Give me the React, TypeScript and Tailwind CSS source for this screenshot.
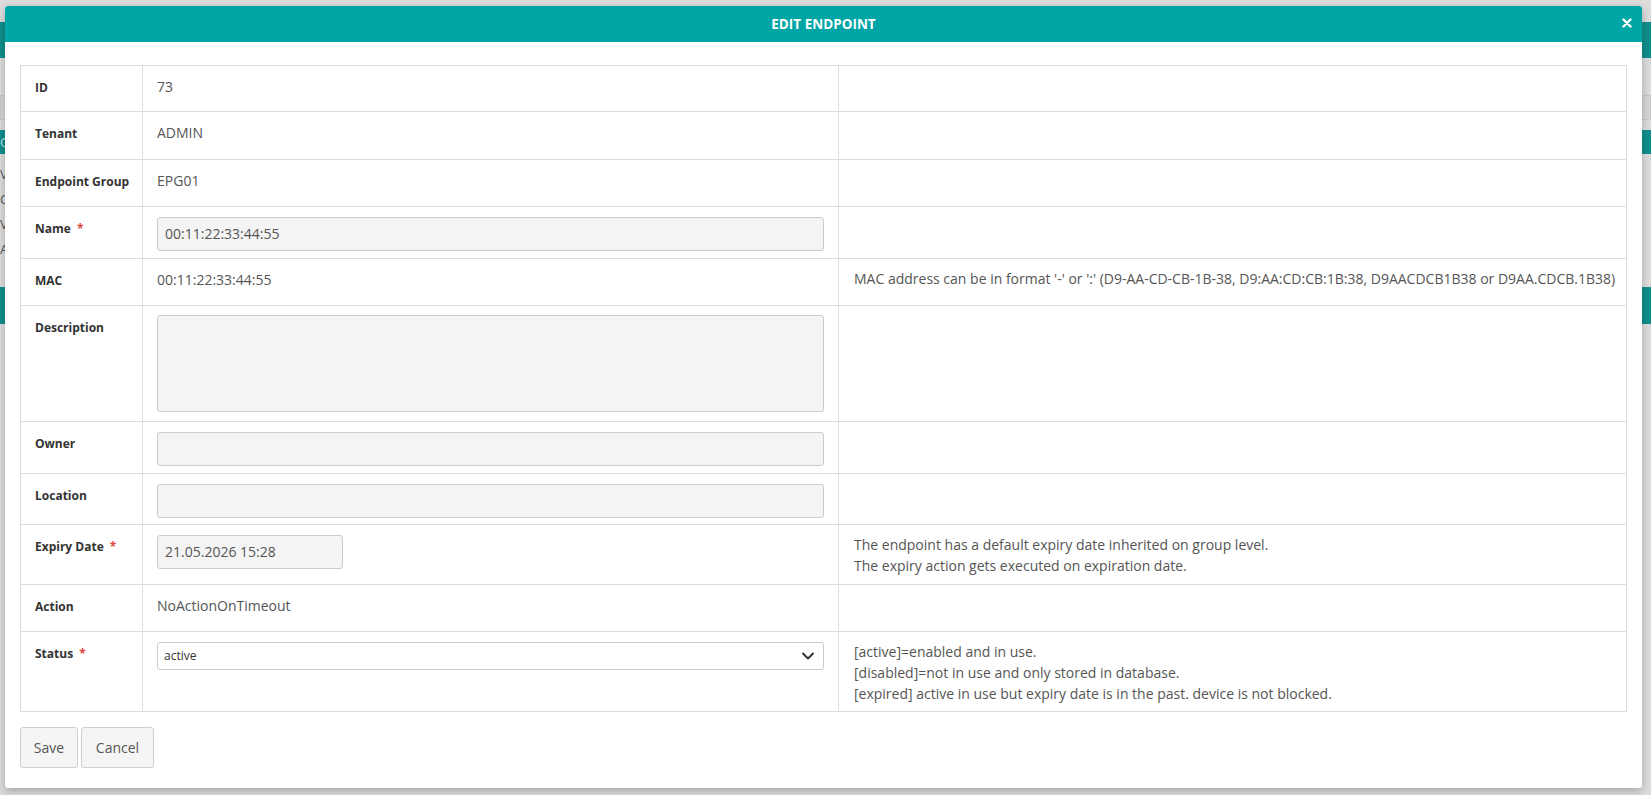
import React from "react";

type Row = {
  label: string;
  req?: boolean;
  h: string;
  kind: "text" | "input" | "textarea" | "date" | "select";
  value?: string;
  help?: string[];
};

const rows: Row[] = [
  { label: "ID", h: "h-[46px]", kind: "text", value: "73" },
  { label: "Tenant", h: "h-[48px]", kind: "text", value: "ADMIN" },
  { label: "Endpoint Group", h: "h-[47px]", kind: "text", value: "EPG01" },
  { label: "Name", req: true, h: "h-[52px]", kind: "input", value: "00:11:22:33:44:55" },
  {
    label: "MAC",
    h: "h-[47px]",
    kind: "text",
    value: "00:11:22:33:44:55",
    help: [
      "MAC address can be in format '-' or ':' (D9-AA-CD-CB-1B-38, D9:AA:CD:CB:1B:38, D9AACDCB1B38 or D9AA.CDCB.1B38)",
    ],
  },
  { label: "Description", h: "h-[116px]", kind: "textarea" },
  { label: "Owner", h: "h-[52px]", kind: "input", value: "" },
  { label: "Location", h: "h-[51px]", kind: "input", value: "" },
  {
    label: "Expiry Date",
    req: true,
    h: "h-[60px]",
    kind: "date",
    value: "21.05.2026 15:28",
    help: [
      "The endpoint has a default expiry date inherited on group level.",
      "The expiry action gets executed on expiration date.",
    ],
  },
  { label: "Action", h: "h-[47px]", kind: "text", value: "NoActionOnTimeout" },
  {
    label: "Status",
    req: true,
    h: "h-[80px]",
    kind: "select",
    value: "active",
    help: [
      "[active]=enabled and in use.",
      "[disabled]=not in use and only stored in database.",
      "[expired] active in use but expiry date is in the past. device is not blocked.",
    ],
  },
];

function ValueCell({ row }: { row: Row }) {
  if (row.kind === "text") {
    return <div className="pt-[11px] text-[14px] leading-[20px] text-[#555]">{row.value}</div>;
  }
  if (row.kind === "input") {
    return (
      <div className="pt-[10px]">
        <div className="h-[34px] w-full rounded-[3px] border border-[#ccc] bg-[#f4f4f4] px-[7px] text-[14px] leading-[32px] text-[#555]">
          {row.value}
        </div>
      </div>
    );
  }
  if (row.kind === "textarea") {
    return (
      <div className="pt-[9px]">
        <div className="h-[97px] w-full rounded-[3px] border border-[#ccc] bg-[#f4f4f4]" />
      </div>
    );
  }
  if (row.kind === "date") {
    return (
      <div className="pt-[10px]">
        <div className="h-[34px] w-[186px] rounded-[3px] border border-[#ccc] bg-[#f4f4f4] px-[7px] text-[14px] leading-[32px] text-[#555]">
          {row.value}
        </div>
      </div>
    );
  }
  return (
    <div className="pt-[10px]">
      <div className="flex h-[28px] w-full items-center justify-between rounded-[3px] border border-[#ccc] bg-white pl-[6px] pr-[8px] text-[12px] text-[#333]">
        <span>{row.value}</span>
        <svg width="14" height="10" viewBox="0 0 14 10" className="text-[#333]">
          <path d="M2 2.5 L7 7.5 L12 2.5" fill="none" stroke="currentColor" strokeWidth="2" strokeLinecap="round" strokeLinejoin="round" />
        </svg>
      </div>
    </div>
  );
}

export default function App() {
  return (
    <div className="relative h-[795px] w-[1651px] overflow-hidden bg-[#dcdcdc] font-['Open_Sans',sans-serif]">
      {/* background page (dimmed) */}
      <div className="flex flex-col">
        <div className="h-[22px]" />
        <div className="h-[36px] bg-[#0f8f8c]" />
        <div className="h-[37px]" />
        <div className="mx-0 h-[25px] border border-[#c8c8c8] bg-[#d6d6d6]" />
        <div className="h-[10px]" />
        <div className="h-[24px] bg-[#0f8f8c] pl-[0px] text-[13px] leading-[24px] text-[#bfe3e1]">O</div>
        <div className="flex flex-col text-[13px] leading-[25px] text-[#555]">
          <div className="pt-[8px]">V</div>
          <div>C</div>
          <div>V</div>
          <div>A</div>
        </div>
        <div className="h-[25px]" />
        <div className="h-[37px] bg-[#0f8f8c]" />
      </div>

      {/* modal */}
      <div className="absolute left-[5px] top-[6px] flex h-[782px] w-[1637px] flex-col overflow-hidden rounded-[3px] bg-white shadow-[0_3px_8px_rgba(0,0,0,0.25)]">
        <div className="relative flex h-[36px] items-center justify-center bg-[#00a5a5]">
          <span className="text-[13.5px] font-bold text-white">EDIT ENDPOINT</span>
          <svg className="absolute right-[10px] top-[12px]" width="10" height="10" viewBox="0 0 10 10">
            <path d="M1.5 1.5 L8.5 8.5 M8.5 1.5 L1.5 8.5" stroke="white" strokeWidth="2.4" strokeLinecap="round" />
          </svg>
        </div>

        <div className="flex flex-col px-[15px] pt-[23px]">
          <div className="flex flex-col border-l border-t border-[#dddddd]">
            {rows.map((row) => (
              <div key={row.label} className={`flex ${row.h}`}>
                <div className="w-[122px] shrink-0 whitespace-nowrap border-b border-r border-[#dddddd] pl-[14px] pt-[12px] text-[12px] font-bold leading-[20px] text-[#333]">
                  {row.label}
                  {row.req && <span className="ml-[6px] text-[#e0473c]">*</span>}
                </div>
                <div className="w-[696px] shrink-0 border-b border-r border-[#dddddd] px-[14px]">
                  <ValueCell row={row} />
                </div>
                <div className="min-w-0 flex-1 whitespace-nowrap border-b border-r border-[#dddddd] pl-[15px] pt-[9px] text-[14px] leading-[21px] text-[#555]">
                  {row.help?.map((l) => (
                    <div key={l}>{l}</div>
                  ))}
                </div>
              </div>
            ))}
          </div>

          <div className="mt-[15px] flex gap-[3px]">
            <button className="h-[41px] w-[58px] rounded-[3px] border border-[#cfcfcf] bg-[#f5f5f5] text-[14px] text-[#555]">
              Save
            </button>
            <button className="h-[41px] w-[73px] rounded-[3px] border border-[#cfcfcf] bg-[#f5f5f5] text-[14px] text-[#555]">
              Cancel
            </button>
          </div>
        </div>
      </div>
    </div>
  );
}
